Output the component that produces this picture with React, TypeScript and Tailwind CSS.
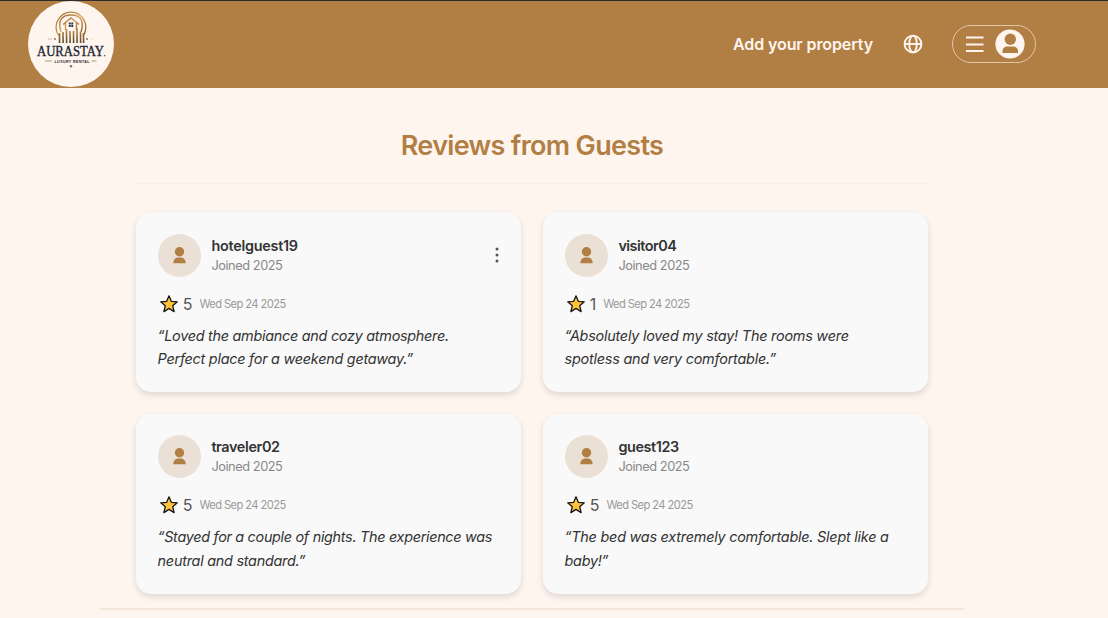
import React from "react";

type Review = {
  name: string;
  rating: number;
  lines: string[];
  nameTracking: string;
  lineTracking: string[];
  menu?: boolean;
};

const reviews: Review[] = [
  {
    name: "hotelguest19",
    rating: 5,
    lines: ["“Loved the ambiance and cozy atmosphere.", "Perfect place for a weekend getaway.”"],
    nameTracking: "tracking-[-0.25px]",
    lineTracking: ["tracking-[-0.27px]", "tracking-[-0.25px]"],
    menu: true,
  },
  {
    name: "visitor04",
    rating: 1,
    lines: ["“Absolutely loved my stay! The rooms were", "spotless and very comfortable.”"],
    nameTracking: "tracking-[-0.5px]",
    lineTracking: ["tracking-[-0.23px]", "tracking-[-0.21px]"],
  },
  {
    name: "traveler02",
    rating: 5,
    lines: ["“Stayed for a couple of nights. The experience was", "neutral and standard.”"],
    nameTracking: "tracking-[-0.35px]",
    lineTracking: ["tracking-[-0.3px]", "tracking-[-0.25px]"],
  },
  {
    name: "guest123",
    rating: 5,
    lines: ["“The bed was extremely comfortable. Slept like a", "baby!”"],
    nameTracking: "tracking-[-0.4px]",
    lineTracking: ["tracking-[-0.23px]", "tracking-[-0.3px]"],
  },
];

function Logo() {
  return (
    <svg viewBox="0 0 86 86" className="size-[86px] overflow-visible" aria-label="Aurastay">
      <defs>
        <linearGradient id="gold" x1="0" x2="1" y1="0" y2="1">
          <stop offset="0" stopColor="#9a6b31" />
          <stop offset=".5" stopColor="#d5a458" />
          <stop offset="1" stopColor="#8a5a26" />
        </linearGradient>
        <linearGradient id="pillar" x1="0" x2="0" y1="28" y2="42" gradientUnits="userSpaceOnUse">
          <stop offset="0" stopColor="#c18e45" />
          <stop offset="1" stopColor="#5a4530" />
        </linearGradient>
      </defs>
      <circle cx="43" cy="43" r="43" fill="#fff5ef" />
      <g fill="none" stroke="url(#gold)" strokeWidth="1.400">
        <path d="M31 35C27 30 27.500 23 30 19C36 8.500 50 8.500 56 19C59 24 58 31 55 35" />
        <path d="M33 31C29 18 35 14 43 14S57 18 53 31" />
        <path d="M35 23.500L43 17L51 23.500M37.500 22V29M48.500 22V29" />
      </g>
      <g stroke="url(#pillar)" strokeWidth="1.600">
        <path d="M31.500 32L31.600 42M35 31L35.100 42M38.500 28L38.600 42M42 30L42.100 42M45.500 30L45.600 42M49 27L49.100 42M52.500 31L52.600 42M55.500 32L55.600 42" />
      </g>
      <path d="M40.800 21.500h1.900v1.900h-1.900zM43.300 21.500h1.900v1.900h-1.900zM40.800 24h1.900v1.900h-1.900zM43.300 24h1.900v1.900h-1.900z" fill="#263246" />
      <g fill="#876b46">
        <circle cx="21" cy="38" r=".6" /><circle cx="23" cy="38" r=".5" /><circle cx="27" cy="38" r=".9" />
        <circle cx="59" cy="38" r=".9" /><circle cx="64" cy="38" r=".4" /><circle cx="43" cy="65.300" r="1.200" />
      </g>
      <text x="9" y="55.300" textLength="67" lengthAdjust="spacingAndGlyphs" fontFamily="Liberation Serif, serif" fontSize="14" stroke="#1d2430" strokeWidth=".35" fill="#1d2430">AURASTAY</text>
      <circle cx="76.700" cy="54.700" r=".6" fill="#1d2430" />
      <text x="26.500" y="61.500" textLength="35" lengthAdjust="spacing" fontFamily="Liberation Sans, sans-serif" fontWeight="700" fontSize="3.600" fill="#28231f">LUXURY RENTAL</text>
      <path d="M17 60h7M63.500 60h5" stroke="#a77c47" strokeWidth=".8" />
    </svg>
  );
}

function Header() {
  return (
    <header className="flex h-[88px] items-center justify-between border-t border-[#302c2d] bg-[#b17f44] pb-px pl-7 pr-[72px] text-[#fff5ef]">
      <Logo />
      <div className="flex items-center">
        <a className="mr-[28.500px] w-[141px] whitespace-nowrap text-[16px] font-semibold tracking-[-0.1px]">Add your property</a>
        <svg viewBox="0 0 20 20" className="mr-[29.500px] size-5" fill="none" stroke="currentColor" strokeWidth="1.900">
          <circle cx="10" cy="10" r="8.400" /><ellipse cx="10" cy="10" rx="3.800" ry="8.400" /><path d="M1.600 10h16.800" />
        </svg>
        <button className="flex h-[38px] w-[84px] items-center justify-between rounded-full border border-[#e2c6a8] pl-[13px] pr-2.5">
          <svg viewBox="0 0 18 16" className="h-4 w-[18px]" stroke="currentColor" strokeWidth="2"><path d="M0 1.500h17.500M0 8.500h17.500M0 15h17.500" /></svg>
          <svg viewBox="0 0 30 30" className="size-[30px]">
            <circle cx="15" cy="15" r="14.600" fill="currentColor" />
            <circle cx="15.300" cy="10.300" r="5.700" fill="#b17f44" />
            <path d="M7.500 24v-1.800c0-3 2.200-4.700 5-4.700h5.500c2.800 0 5 1.700 5 4.700V24z" fill="#b17f44" />
          </svg>
        </button>
      </div>
    </header>
  );
}

function ReviewCard({ review }: { review: Review }) {
  return (
    <article className="h-[180px] rounded-[15px] bg-[#f9f9f9] px-[21.600px] pt-[21.600px] shadow-[0_3px_6px_rgba(0,0,0,0.12)]">
      <div className="flex h-[43px] items-center">
        <div className="flex size-[43px] items-center justify-center rounded-full bg-[#ebe0d6]">
          <svg viewBox="0 0 13 17" className="h-[17px] w-[13px]" fill="#b17f44"><circle cx="6.500" cy="4.700" r="4.700" /><path d="M.3 16.300C.3 12.500 2.700 10.400 5 10.400h3c2.300 0 4.700 2.100 4.700 5.900z" /></svg>
        </div>
        <div className="ml-[10.800px] flex grow flex-col">
          <div className="h-5 text-[14.400px] leading-[20px] font-semibold text-[#333]"><span className={review.nameTracking}>{review.name}</span></div>
          <div className="h-[19px] text-[12.800px] leading-[19px] text-[#888]"><span className="tracking-[-0.45px]">Joined 2025</span></div>
        </div>
        {review.menu && (
          <svg viewBox="0 0 4 16" className="mr-[0.500px] h-4 w-1" fill="#555"><circle cx="2" cy="2" r="1.500" /><circle cx="2" cy="8" r="1.500" /><circle cx="2" cy="14" r="1.500" /></svg>
        )}
      </div>
      <div className="mt-[15px] flex h-6 items-center">
        <svg viewBox="0 0 20 20" className="ml-[1.200px] size-5"><path d="M10 1.800l2.300 5.500 6 .5-4.600 3.900 1.400 5.900-5.100-3.200-5.100 3.200 1.400-5.900-4.600-3.900 6-.5z" fill="#ffc33d" stroke="#171717" strokeWidth="1.300" strokeLinejoin="round" /></svg>
        <span className="ml-1 text-[16px] leading-[22px] tracking-[-0.5px] text-[#555]">{review.rating}</span>
        <span className="ml-[7.400px] pt-px whitespace-nowrap text-[11.200px] tracking-[-0.6px] text-[#999]">Wed Sep 24 2025</span>
      </div>
      <p className="mt-[8.200px] text-[14.400px] leading-[23.200px] text-[#333] italic">
        {review.lines.map((line, i) => (
          <span key={line} className="block whitespace-nowrap"><span className={review.lineTracking[i]}>{line}</span></span>
        ))}
      </p>
    </article>
  );
}

export default function App() {
  return (
    <div className="h-[618px] overflow-hidden bg-[#fff5ef] font-['Inter',sans-serif]">
      <Header />
      <main className="ml-[136px] w-[792px]">
        <div className="flex h-24 items-center justify-center border-b border-[#f3efed] pt-5">
          <h1 className="whitespace-nowrap text-[27px] leading-9 font-semibold tracking-[-0.68px] text-[#b17f44]">Reviews from Guests</h1>
        </div>
        <section className="mt-7 grid grid-cols-2 gap-x-[22px] gap-y-[21.600px]">
          {reviews.map((review) => <ReviewCard key={review.name} review={review} />)}
        </section>
      </main>
      <footer className="mt-[14.400px] ml-[100px] w-[864px] border-t-2 border-[#f5e6da]" />
    </div>
  );
}
